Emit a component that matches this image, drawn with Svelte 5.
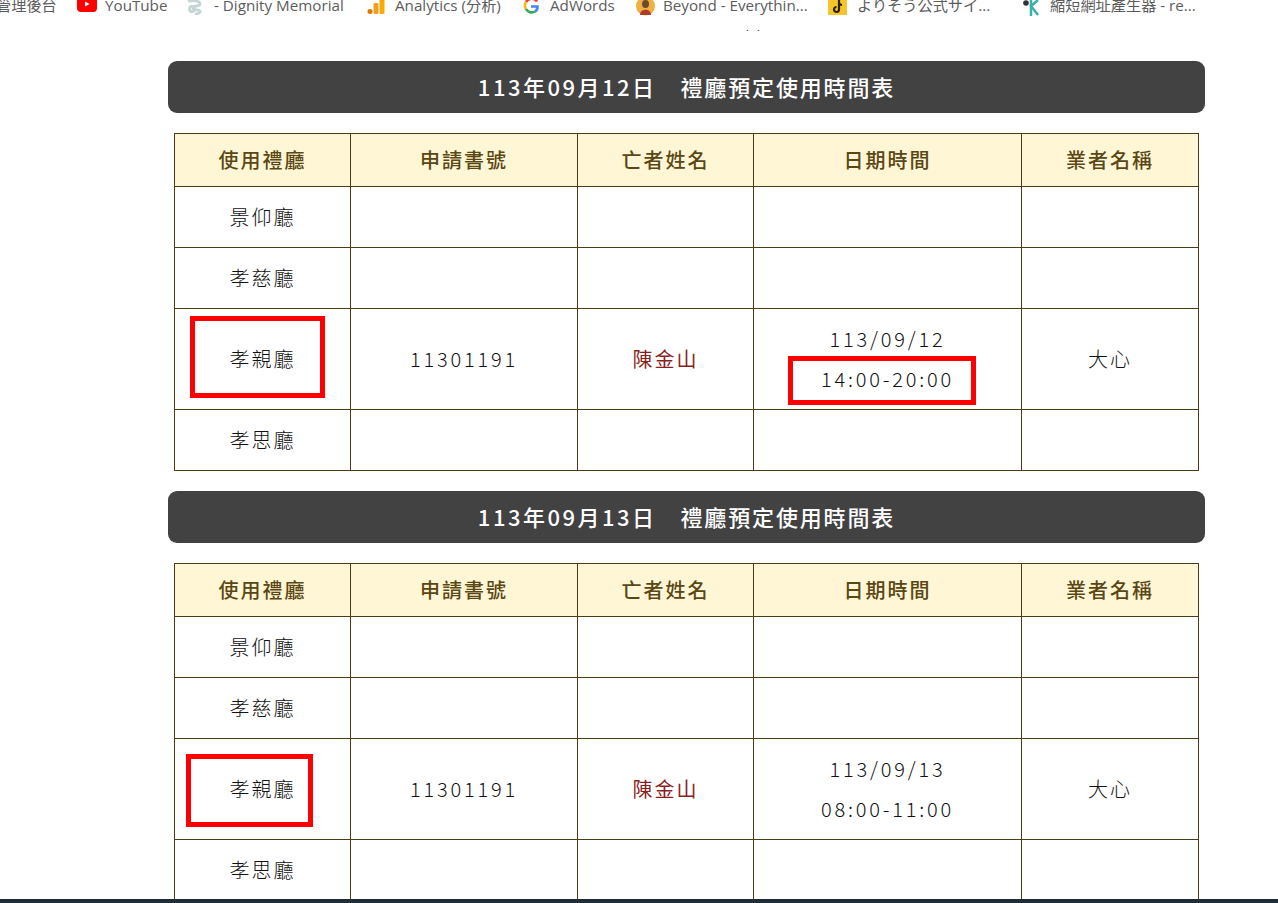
<script>
  const days = [
    { day: '113年09月12日', date: '113/09/12', time: '14:00-20:00', hallBox: 'hall-a', timeBox: true },
    { day: '113年09月13日', date: '113/09/13', time: '08:00-11:00', hallBox: 'hall-b', timeBox: false }
  ];
  const heads = ['使用禮廳', '申請書號', '亡者姓名', '日期時間', '業者名稱'];
</script>

<div class="page">
  <div class="bookmarks">
    <span class="bm first">管理後台</span>
    <span class="bm yt">
      <svg width="20" height="12" viewBox="0 0 20 12"><rect x="0" y="-5" width="20" height="17" rx="4" fill="#f00"/><path d="M8 1.500v5l4.500-2.500z" fill="#fff"/></svg>
      YouTube
    </span>
    <span class="bm dm">
      <svg width="20" height="15" viewBox="0 0 20 15" fill="none" stroke="#c3d6d3" stroke-width="2.800"><path d="M2 1c6-1 12 0 12 3s-7 1-7 4 6 1 7 3-3 3-5 3"/><circle cx="6" cy="9" r="2.500"/></svg>
      - Dignity Memorial
    </span>
    <span class="bm an">
      <svg width="18" height="14" viewBox="0 0 18 14"><rect x="12.500" y="-2" width="5" height="16" rx="1.500" fill="#f9ab00"/><rect x="6.500" y="3" width="5" height="11" rx="1.500" fill="#f0a020"/><circle cx="3" cy="11.500" r="2.500" fill="#e37400"/></svg>
      Analytics (分析)
    </span>
    <span class="bm ad">
      <svg width="16" height="14" viewBox="0 0 16 14" fill="none" stroke-width="2.600"><path d="M14 1.500A6.500 6.500 0 0 0 3 2" stroke="#ea4335"/><path d="M3 2a6.500 6.500 0 0 0 0 7" stroke="#fbbc05"/><path d="M3 9a6.500 6.500 0 0 0 9 2.500" stroke="#34a853"/><path d="M12 11.500c2-1 2.500-3 2.500-5H8" stroke="#4285f4"/></svg>
      AdWords
    </span>
    <span class="bm be">
      <svg width="19" height="16" viewBox="0 0 19 16"><circle cx="9.500" cy="6" r="9.500" fill="#f0b040"/><ellipse cx="9.500" cy="4" rx="3.500" ry="4" fill="#6b4a32"/><path d="M4 15c0-7 11-7 11 0z" fill="#b03a2e"/></svg>
      Beyond - Everythin...
    </span>
    <span class="bm ti">
      <svg width="19" height="15" viewBox="0 0 19 15"><rect width="19" height="15" fill="#f5c52b"/><path d="M11 0v9.500a2.500 2.500 0 1 1-2.500-2.500M11 3c.5 1 1.500 2 3 2" fill="none" stroke="#2b2410" stroke-width="2.200"/></svg>
      よりそう公式サイ...
    </span>
    <span class="bm sh">
      <svg width="20" height="16" viewBox="0 0 20 16" fill="none" stroke-width="2.500"><circle cx="4" cy="3" r="2.800" fill="#333"/><path d="M9 -1v17" stroke="#3ab0ac"/><path d="M16 0l-7 6 7 9" stroke="#3ab0ac"/></svg>
      縮短網址產生器 - re...
    </span>
  </div>
  <div class="dots">. .</div>

  <main>
    {#each days as day}
      <section>
        <h2><span class="h-date">{day.day}</span><span class="h-rest">　禮廳預定使用時間表</span></h2>
        <table>
          <colgroup>
            <col class="c1" /><col class="c2" /><col class="c3" /><col class="c4" /><col class="c5" />
          </colgroup>
          <thead>
            <tr>{#each heads as h}<th>{h}</th>{/each}</tr>
          </thead>
          <tbody>
            <tr><td>景仰廳</td><td></td><td></td><td></td><td></td></tr>
            <tr><td>孝慈廳</td><td></td><td></td><td></td><td></td></tr>
            <tr class="booked">
              <td class="mark">孝親廳<span class="box {day.hallBox}"></span></td>
              <td class="num">11301191</td>
              <td class="name">陳金山</td>
              <td class="mark num">{day.date}<br />{day.time}{#if day.timeBox}<span class="box time"></span>{/if}</td>
              <td>大心</td>
            </tr>
            <tr><td>孝思廳</td><td></td><td></td><td></td><td></td></tr>
          </tbody>
        </table>
      </section>
    {/each}
  </main>
  <div class="taskbar"></div>
</div>

<style>
  :global(body) {
    margin: 0;
    background: #fff;
  }
  .page {
    height: 903px;
    overflow: hidden;
    position: relative;
    font-family: "Noto Sans CJK TC", "Noto Sans", sans-serif;
  }
  .bookmarks {
    display: flex;
    height: 15px;
    align-items: flex-start;
    font-family: "Open Sans", "Noto Sans CJK TC", sans-serif;
    font-size: 15.2px;
    line-height: 20px;
    color: #5c5c5c;
    white-space: nowrap;
  }
  .bm {
    display: flex;
    align-items: flex-start;
    flex: none;
    height: 15px;
    margin-top: -5px;
    gap: 8px;
  }
  .bm svg { flex: none; margin-top: 5px; }
  .first { width: 81px; margin-left: -4px; }
  .yt { width: 109px; }
  .dm { width: 181px; }
  .an { width: 156px; gap: 10px; }
  .ad { width: 113px; gap: 11px; }
  .be { width: 192px; }
  .ti { width: 194px; gap: 10px; }
  .sh { width: 180px; }
  .dots {
    height: 46px;
    padding-left: 746px;
    font-size: 10px;
    line-height: 24px;
    letter-spacing: 3px;
    color: #333;
    box-sizing: border-box;
  }
  main {
    width: 1037px;
    margin-left: 168px;
  }
  section {
    margin-bottom: 20px;
  }
  h2 {
    margin: 0 0 20px;
    height: 52px;
    line-height: 50px;
    border-radius: 9px;
    background: #424242;
    color: #fff;
    font-size: 22px;
    font-weight: 500;
    text-align: center;
  }
  .h-date { letter-spacing: 2.5px; }
  .h-rest { letter-spacing: 1.85px; }
  table {
    width: 1025px;
    margin-left: 6px;
    border-collapse: collapse;
    table-layout: fixed;
    font-size: 20px;
    letter-spacing: 2px;
    color: #111;
  }
  .c1 { width: 176px; }
  .c2 { width: 227px; }
  .c3 { width: 176px; }
  .c4 { width: 268px; }
  .c5 { width: 177px; }
  th, td {
    border: 1px solid #4a3c14;
    text-align: center;
    padding: 0 0 2px;
  }
  th {
    height: 50px;
    background: #fff6d6;
    color: #5a4714;
    font-weight: 500;
  }
  td {
    height: 58px;
    font-weight: 300;
  }
  .booked td {
    height: 100px;
    padding-bottom: 0;
    line-height: 40px;
  }
  .booked .num {
    letter-spacing: 2.8px;
  }
  .booked .name {
    color: #8a1f1f;
    font-weight: 400;
  }
  .mark {
    position: relative;
  }
  .box {
    position: absolute;
    box-sizing: border-box;
    border: 5px solid #f00;
  }
  .hall-a { left: 15px; top: 7px; width: 135px; height: 82px; }
  .hall-b { left: 11px; top: 15px; width: 127px; height: 73px; }
  .time { left: 34px; top: 47px; width: 188px; height: 49px; }
  .taskbar {
    position: absolute;
    left: 0;
    right: 0;
    bottom: 0;
    height: 4px;
    background: #1d2d38;
  }
</style>
